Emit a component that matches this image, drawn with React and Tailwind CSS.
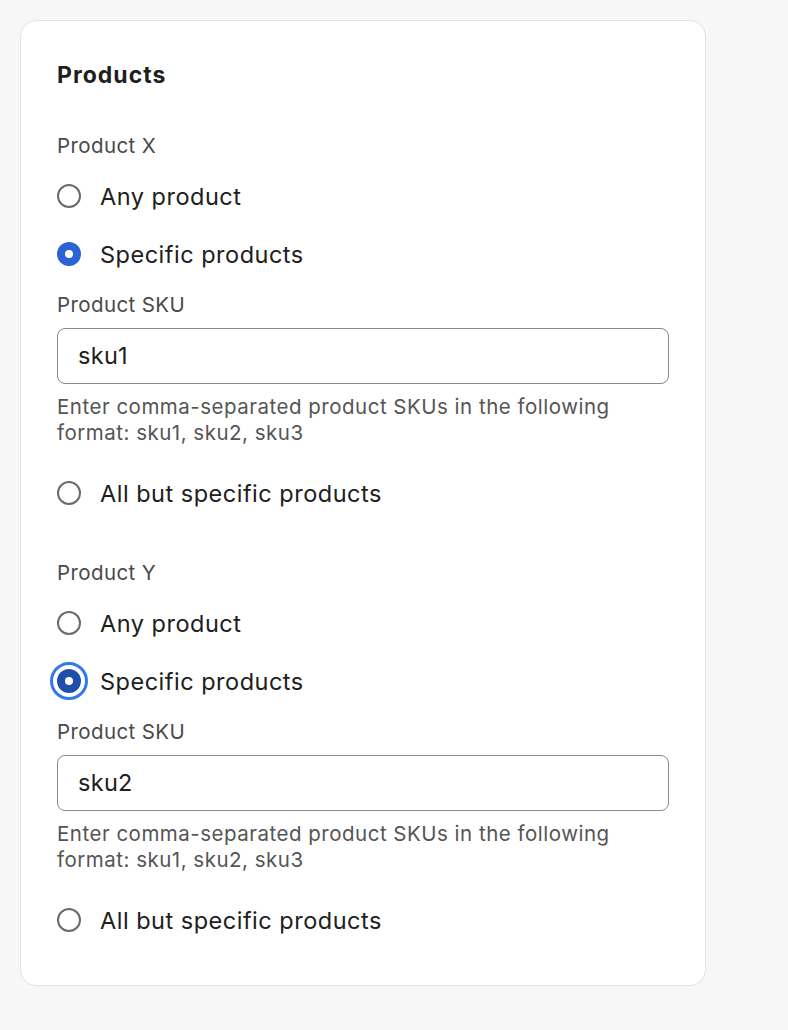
const Radio = ({ checked, focused, label }) => {
  return (
    <label className="flex items-center h-[34px]">
      <span className="w-6 h-6 flex items-center justify-center shrink-0">
        {checked ? (
          <span
            className={`relative w-6 h-6 rounded-full flex items-center justify-center ${
              focused ? 'bg-[#1f4fa8]' : 'bg-[#2a63d6]'
            }`}
          >
            {focused && (
              <span className="absolute -inset-[7px] rounded-full border-[3px] border-[#3478f0]" />
            )}
            <span className="w-2 h-2 rounded-full bg-white" />
          </span>
        ) : (
          <span className="w-6 h-6 rounded-full border-2 border-[#6b6b6b] bg-white" />
        )}
      </span>
      <span className="ml-[19px] pt-px text-[23.5px] tracking-[0.5px] text-[#202020]">{label}</span>
    </label>
  )
}

const ProductGroup = ({ title, sku, focused }) => {
  return (
    <div>
      <div className="text-[20.5px] leading-[26px] tracking-[0.4px] text-[#4a4a4a]">{title}</div>
      <div className="mt-[20px] flex flex-col gap-[24px]">
        <Radio label="Any product" />
        <Radio label="Specific products" checked focused={focused} />
      </div>
      <div className="mt-[21px] text-[20.5px] leading-[26px] tracking-[0.4px] text-[#4a4a4a]">
        Product SKU
      </div>
      <div className="mt-[10px] h-[56px] rounded-[8px] border border-[#8a8a8a] bg-white flex items-center px-[20px] text-[23.5px] tracking-[0.3px] text-[#202020]">
        {sku}
      </div>
      <p className="mt-[10px] text-[20.5px] leading-[26px] tracking-[0.5px] text-[#555555]">
        Enter comma-separated product SKUs in the following
        <br />
        format: sku1, sku2, sku3
      </p>
      <div className="mt-[30px]">
        <Radio label="All but specific products" />
      </div>
    </div>
  )
}

export default function App() {
  return (
    <div
      className="min-h-[1030px] bg-[#f7f7f7] pt-5 pl-5"
      style={{ fontFamily: 'Inter, "Noto Sans", sans-serif' }}
    >
      <div className="w-[686px] rounded-[16px] border border-[#e3e3e3] bg-white px-[36px] pt-[40px] pb-[48px]">
        <h2 className="text-[23px] leading-[28px] font-bold tracking-[1px] text-[#1f1f1f]">
          Products
        </h2>
        <div className="mt-[44px]">
          <ProductGroup title="Product X" sku="sku1" />
        </div>
        <div className="mt-[50px]">
          <ProductGroup title="Product Y" sku="sku2" focused />
        </div>
      </div>
    </div>
  )
}
